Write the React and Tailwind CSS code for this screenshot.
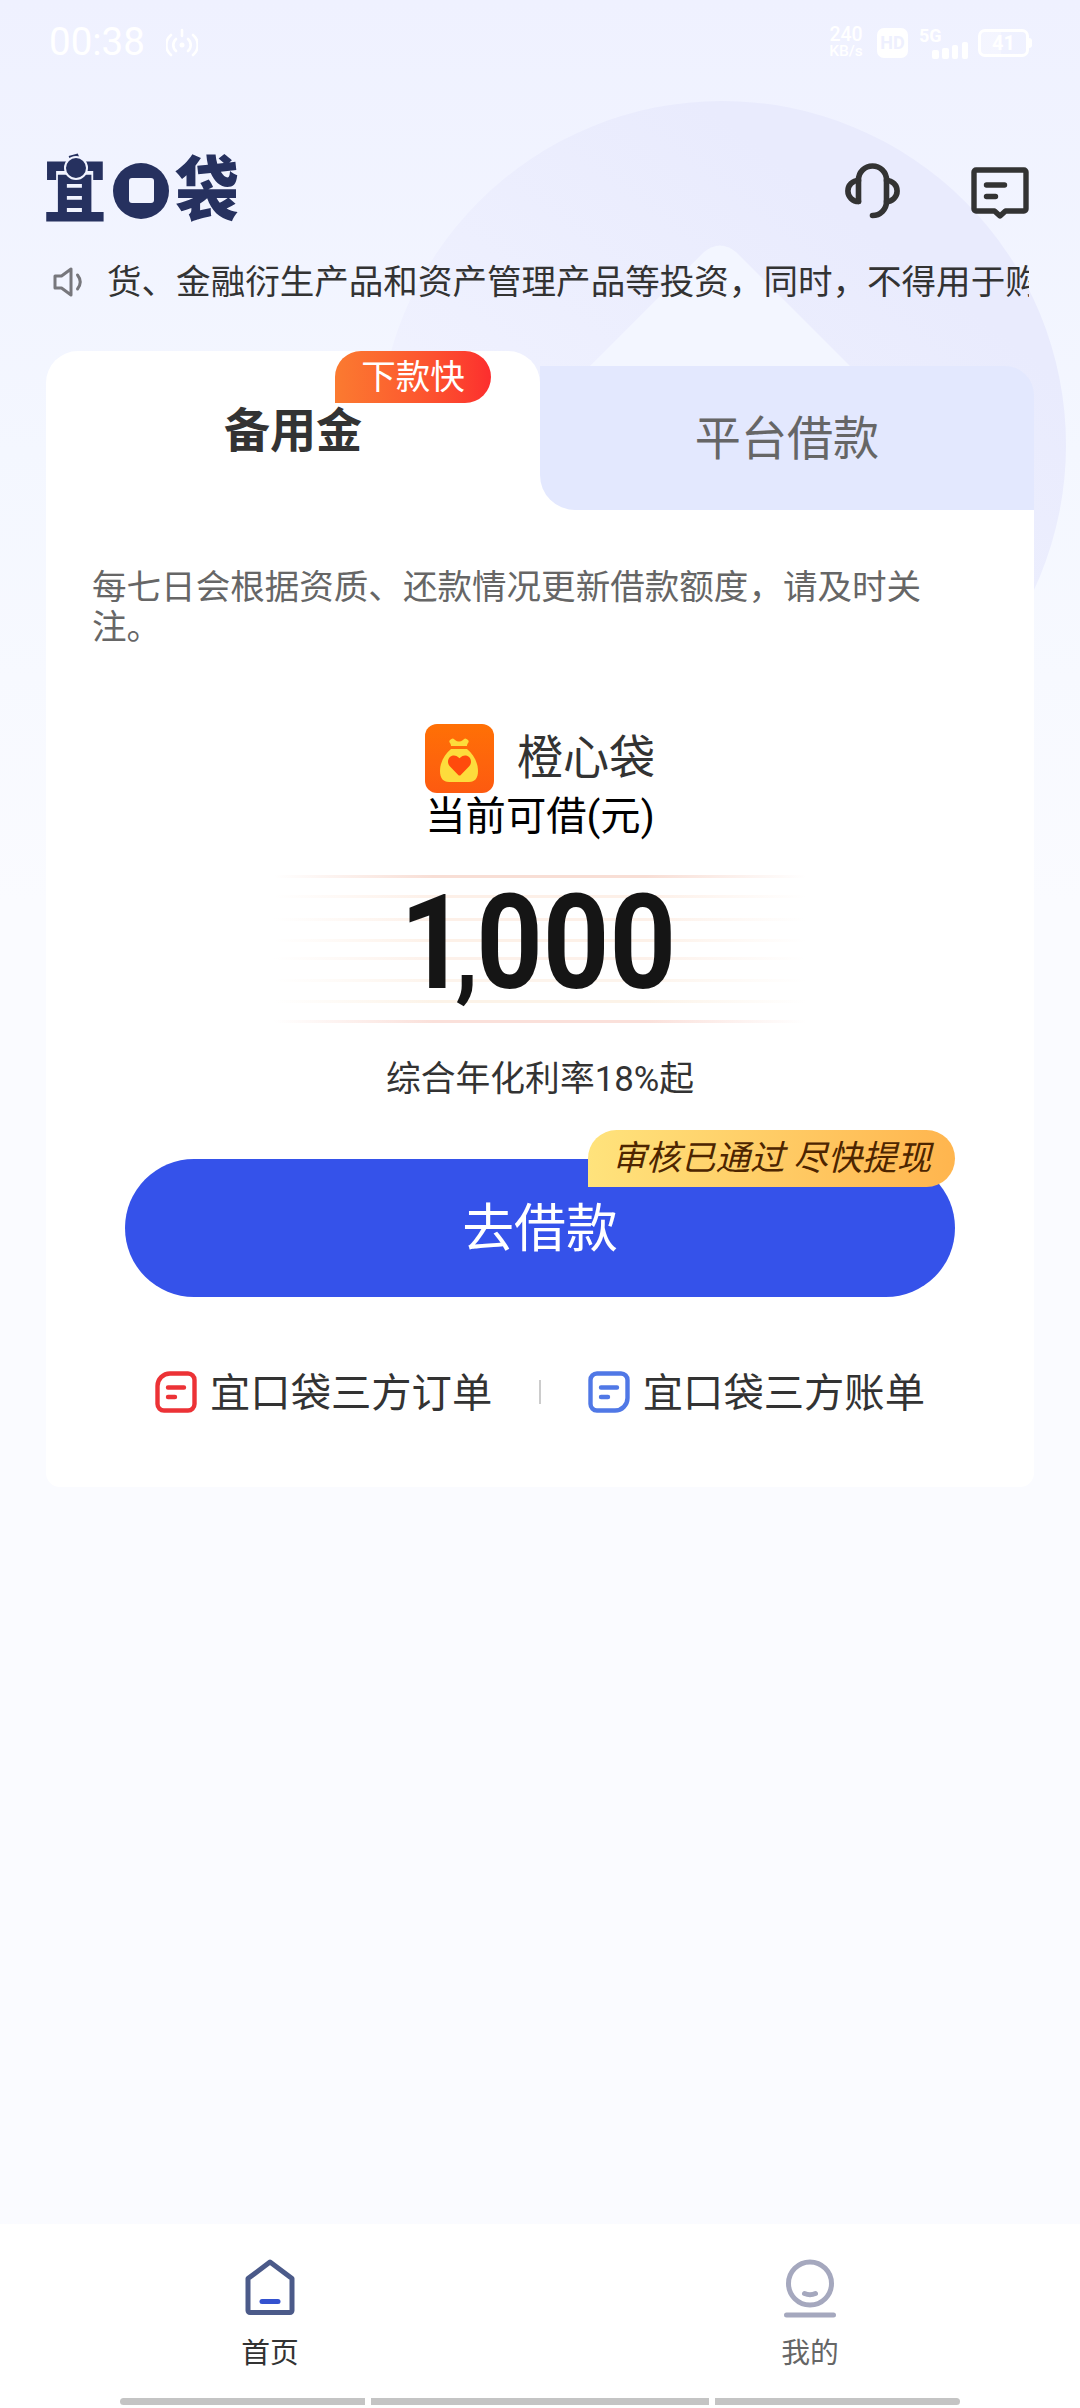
import { FaHeart } from "react-icons/fa";

const marqueeText = "货、金融衍生产品和资产管理产品等投资，同时，不得用于购";

const lineStyles = [
  { top: 1, color: "#f8ded5" },
  { top: 21, color: "#fdf0e8" },
  { top: 44, color: "#fdf0e8" },
  { top: 65, color: "#fdf1e8" },
  { top: 83, color: "#fdf1ea" },
  { top: 105, color: "#fdf4ec" },
  { top: 126, color: "#fcf3e8" },
  { top: 146, color: "#fae0da" },
];

function StatusBar() {
  return (
    <div className="relative flex h-[88px] items-center justify-between pb-[3px] pl-[49px] pr-[48px] text-white">
      <div className="flex items-center gap-[21px]">
        <span className="font-[Roboto] text-[38.5px] leading-none">00:38</span>
        <svg width="32" height="30" viewBox="0 0 32 30" fill="none" stroke="currentColor" strokeWidth="2.6" strokeLinecap="round">
          <circle cx="16" cy="17" r="2.5" fill="currentColor" stroke="none" />
          <path d="M16 2v6M10 11a8 8 0 0 0 0 12M22 11a8 8 0 0 1 0 12M5 7a13 13 0 0 0 0 20M27 7a13 13 0 0 1 0 20" />
        </svg>
      </div>
      <div className="flex items-center font-[Roboto]">
        <div className="mr-[14px] flex w-[34px] flex-col items-center font-medium">
          <span className="text-[19.5px] leading-[16px]">240</span>
          <span className="text-[15.5px] leading-[16px]">KB/s</span>
        </div>
        <div className="mr-[11px] flex h-[30px] w-[31px] items-center justify-center rounded-[7px] bg-white text-[18px] font-bold text-[#eef0fe]">
          HD
        </div>
        <div className="relative mr-[10px] h-[32px] w-[49px]">
          <span className="absolute left-0 top-0 text-[18px] font-bold leading-[18px]">5G</span>
          <svg className="absolute bottom-0 right-0" width="36" height="18" fill="currentColor">
            <rect x="0" y="9" width="7" height="9" rx="2" />
            <rect x="10" y="7" width="7" height="11" rx="2" />
            <rect x="20" y="4" width="6" height="14" rx="2" />
            <rect x="30" y="1" width="6" height="17" rx="2" />
          </svg>
        </div>
        <div className="flex h-[28px] w-[51px] items-center justify-center rounded-[7px] border-[3px] border-white bg-linear-to-r from-white/30 from-45% to-transparent to-45% text-[20px] font-bold">
          41
        </div>
        <div className="h-[10px] w-[3px] rounded-r bg-white" />
      </div>
    </div>
  );
}

function Logo() {
  return (
    <div className="relative flex h-[70px] w-[191px] items-center justify-between text-[64px] font-black leading-[96px] text-[#26315f]">
      <span className="-ml-[3px] w-[64px] scale-y-[1.12] pt-[3px]">宜</span>
      <span className="absolute left-[18px] top-0 size-[24px] rounded-full border-2 border-[#f1f3ff] bg-[#26315f]" />
      <span className="flex size-[56px] shrink-0 items-center justify-center rounded-full bg-[#26315f]">
        <span className="size-[25px] rounded-[3px] bg-[#f1f3ff]" />
      </span>
      <span className="-mr-[2px] w-[64px] scale-y-[1.1] pt-[3px]">袋</span>
    </div>
  );
}

function Header() {
  return (
    <header className="relative flex h-[150px] items-center justify-between pl-[46px] pr-[51px] pt-[55px]">
      <Logo />
      <div className="flex items-center gap-[70px] text-[#333]">
        <svg width="56" height="56" viewBox="0 0 56 56" fill="none" stroke="currentColor" strokeWidth="5.6" strokeLinecap="round" strokeLinejoin="round">
          <path d="M13.5 38.5V17a14 14 0 0 1 28 0V38.500a14 14 0 0 1-14 14" />
          <path d="M13.500 17.500a10.600 10.500 0 0 0 0 21M41.500 17.500a10.600 10.500 0 0 1 0 21" />
        </svg>
        <svg className="mt-[4px]" width="58" height="52" viewBox="0 0 58 52" fill="none" stroke="currentColor" strokeWidth="5.4" strokeLinecap="round" strokeLinejoin="round">
          <path d="M5 3h48a2 2 0 0 1 2 2v37a2 2 0 0 1-2 2H34.5L29 49l-5.500-5H5a2 2 0 0 1-2-2V5a2 2 0 0 1 2-2Z" />
          <path d="M15.500 18h18M15.500 29.500h9" />
        </svg>
      </div>
    </header>
  );
}

function Notice() {
  return (
    <div className="relative flex h-[88px] items-center pl-[53px] pr-[51px]">
      <svg width="32" height="32" viewBox="0 0 32 32" fill="none" stroke="#77777c" strokeWidth="3" strokeLinejoin="round" strokeLinecap="round">
        <path d="M2 10h6.500L18 3v26l-9.500-7H2Z" />
        <path d="M24.500 9q5.500 7 0 14" />
      </svg>
      <div className="ml-[22px] min-w-0 flex-1 overflow-hidden whitespace-nowrap text-[34.56px] leading-[50px] text-[#333]">
        {marqueeText}
      </div>
    </div>
  );
}

function Tabs() {
  return (
    <div className="flex h-[159px] items-end rounded-t-[32px]">
      <div className="relative flex h-full w-[494px] justify-center rounded-t-[32px] bg-white pt-[56px] text-[46.08px] font-bold leading-[48px] text-[#333]">
        备用金
        <span className="absolute left-[289px] top-0 flex h-[52px] w-[156px] items-center justify-center rounded-full rounded-bl-none bg-linear-to-r from-[#fb7a30] to-[#fc2d2e] text-[34.56px] font-normal text-white">
          下款快
        </span>
      </div>
      <div className="h-[144px] flex-1 rounded-tr-[29px] bg-linear-to-b from-transparent from-50% to-white to-50%">
        <div className="flex h-full items-center justify-center rounded-bl-[35px] rounded-tr-[29px] bg-[#e3e8fe] pt-[4px] text-[46.08px] text-[#666]">
          平台借款
        </div>
      </div>
    </div>
  );
}

function Amount() {
  return (
    <div className="relative mt-[33px] h-[148px] w-[532px]">
      {lineStyles.map((line) => (
        <div
          key={line.top}
          className="absolute inset-x-0 h-[3px]"
          style={{
            top: line.top,
            background: `linear-gradient(90deg, transparent 0%, ${line.color} 30%, ${line.color} 70%, transparent 100%)`,
          }}
        />
      ))}
      <div className="absolute left-[126px] top-[4px] flex h-[130px] origin-left scale-x-[0.88] items-baseline font-[Roboto] text-[132px] font-bold leading-[130px] text-[#151515]">
        <span className="-mr-[13px]">1</span>
        <span className="-mr-[2px] text-[105px]">,</span>
        <span>000</span>
      </div>
    </div>
  );
}

function BagIcon() {
  return (
    <div className="relative flex size-[69px] items-center justify-center rounded-[12px] bg-linear-to-b from-[#ff7005] to-[#fd5a10]">
      <svg className="mt-[3px]" width="40" height="46" viewBox="0 0 40 46" fill="#fddc3c">
        <path d="M11 3q3-3 5 0 4 3 8 0 2-3 5 0c2 2-1 3-1 6H12c0-3-3-4-1-6Z" />
        <path d="M12 12h16c6 5 11 13 11 22 0 7-3 11-9 11H10c-6 0-9-4-9-11 0-9 5-17 11-22Z" />
      </svg>
      <FaHeart className="absolute left-[23px] top-[30px] size-[23px] text-[#ff4a0c]" />
    </div>
  );
}

function RecordLink({ label, children }) {
  return (
    <div className="flex items-center gap-[13px] text-[40.32px] leading-[48px] text-[#333]">
      {children}
      <span className="pt-[4px]">{label}</span>
    </div>
  );
}

function LoanCard() {
  return (
    <main className="relative mx-[46px] h-[1136px] rounded-b-[14px] rounded-t-[32px]">
      <Tabs />
      <div className="flex h-[977px] flex-col items-center rounded-b-[14px] bg-white">
        <p className="mt-[57px] w-full pl-[46px] pr-[100px] text-[34.56px] leading-[40px] text-[#666]">
          每七日会根据资质、还款情况更新借款额度，请及时关注。
        </p>
        <div className="mt-[77px] flex items-center gap-[23px] text-[46.08px] leading-[69px] text-[#333]">
          <BagIcon />
          <span>橙心袋</span>
        </div>
        <p className="text-[40.32px] leading-[48px] text-black">当前可借(元)</p>
        <Amount />
        <p className="mt-[37px] text-[34.8px] leading-[40px] text-[#333]">综合年化利率18%起</p>
        <div className="relative mt-[60px]">
          <button className="flex h-[138px] w-[830px] items-center justify-center rounded-full bg-[#3552ea] pt-[4px] text-[51.84px] text-white">
            去借款
          </button>
          <span className="absolute -top-[29px] right-0 flex h-[57px] w-[367px] items-center justify-center rounded-full rounded-bl-none bg-linear-to-r from-[#ffe37c] to-[#ffb54e] text-[34.56px] italic text-[#4d2500]">
            审核已通过 尽快提现
          </span>
        </div>
        <div className="mt-[69px] flex items-center">
          <RecordLink label="宜口袋三方订单">
            <svg width="42" height="42" viewBox="0 0 42 42" fill="none" stroke="#ec3236" strokeWidth="4.4" strokeLinecap="round">
              <path d="M15 2.500h18a6.500 6.500 0 0 1 6.500 6.500v24a6.500 6.500 0 0 1-6.500 6.500H9A6.500 6.500 0 0 1 2.500 33V15A12.500 12.500 0 0 1 15 2.500Z" />
              <path d="M13 16.500h16M13 26h7" />
            </svg>
          </RecordLink>
          <div className="mx-[47px] h-[24px] w-[1.5px] bg-[#ccc]" />
          <RecordLink label="宜口袋三方账单">
            <svg width="42" height="42" viewBox="0 0 42 42" fill="none" stroke="#5078e6" strokeWidth="4.4" strokeLinecap="round">
              <path d="M9 2.500h24A6.500 6.500 0 0 1 39.500 9v18A12.500 12.500 0 0 1 27 39.500H9A6.500 6.500 0 0 1 2.500 33V9A6.500 6.500 0 0 1 9 2.500Z" />
              <path d="M13 16.500h16M13 26h7" />
            </svg>
          </RecordLink>
        </div>
      </div>
    </main>
  );
}

function BottomNav() {
  return (
    <nav className="relative mt-auto flex h-[184px] flex-col bg-white">
      <div className="flex flex-1 pt-[34px] text-[28.8px] leading-[40px]">
        <div className="flex flex-1 flex-col items-center gap-[15px] text-[#333]">
          <svg width="52" height="60" viewBox="0 0 52 60" fill="none" strokeWidth="5" strokeLinejoin="round" strokeLinecap="round">
            <path d="M26 4 48 20.500v32a2 2 0 0 1-2 2H6a2 2 0 0 1-2-2v-32Z" stroke="#4b5a89" />
            <path d="M18 43.500h16" stroke="#3452cf" />
          </svg>
          首页
        </div>
        <div className="flex flex-1 flex-col items-center gap-[15px] text-[#666]">
          <svg width="52" height="60" viewBox="0 0 52 60" fill="none" stroke="#a5a8be" strokeWidth="5" strokeLinecap="round">
            <circle cx="26" cy="25.500" r="21.500" />
            <path d="M20.500 35.500q5.500 2.500 11 0M2.500 57h47" />
          </svg>
          我的
        </div>
      </div>
      <div className="mb-[3px] flex h-[7px] justify-center gap-[6px]">
        <div className="w-[245px] rounded-l-full bg-[#c4c4c4]" />
        <div className="w-[338px] bg-[#c4c4c4]" />
        <div className="w-[245px] rounded-r-full bg-[#c4c4c4]" />
      </div>
    </nav>
  );
}

export default function App() {
  return (
    <div
      lang="zh-CN"
      className="relative flex h-[2408px] w-[1080px] flex-col overflow-hidden bg-[#fafbff] font-[Roboto,'Noto_Sans_CJK_SC',sans-serif]"
    >
      <div className="absolute inset-x-0 top-0 h-[900px] bg-linear-to-b from-[#eff1ff] via-[#f4f7ff] to-[#fafbff]" />
      <svg className="absolute left-0 top-0" width="1080" height="900" viewBox="0 0 1080 900">
        <defs>
          <linearGradient id="disc" x1="0.6" y1="0.1" x2="0.1" y2="0.75">
            <stop offset="0" stopColor="#e9ebfd" />
            <stop offset="1" stopColor="#f2f4ff" />
          </linearGradient>
        </defs>
        <circle cx="722" cy="445" r="344" fill="url(#disc)" />
        <path d="M704 252q16-13 32 0L1000 516H440Z" fill="#f3f6ff" />
      </svg>
      <StatusBar />
      <Header />
      <div className="mb-[25px]">
        <Notice />
      </div>
      <LoanCard />
      <BottomNav />
    </div>
  );
}
